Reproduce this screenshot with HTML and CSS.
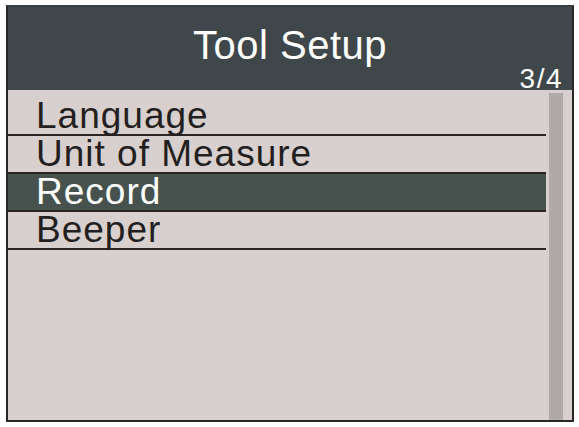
FILE: index.html
```html
<!DOCTYPE html>
<html>
<head>
<meta charset="utf-8">
<link rel="stylesheet" href="styles.css">
</head>
<body>
<div class="frame">
  <div class="header">
    <div class="title">Tool Setup</div>
    <div class="page">3/4</div>
  </div>
  <div class="body">
    <div class="list">
      <div class="row">Language</div>
      <div class="row">Unit of Measure</div>
      <div class="row selected">Record</div>
      <div class="row">Beeper</div>
    </div>
    <div class="scroll"></div>
  </div>
</div>
</body>
</html>
```
FILE: styles.css
```css
html, body {
  margin: 0;
  padding: 0;
  background: #ffffff;
}
body {
  font-family: "Liberation Sans", Arial, sans-serif;
}
.frame {
  box-sizing: border-box;
  width: 568px;
  height: 417px;
  margin: 5px 0 0 6px;
  border: 2px solid #2a2626;
  border-top-color: #3a4042;
  display: flex;
  flex-direction: column;
  background: #d8d0ce;
}
.header {
  height: 83px;
  flex: none;
  background: #40474a;
  display: grid;
  color: #ffffff;
}
.title {
  grid-area: 1 / 1;
  justify-self: center;
  align-self: start;
  margin-top: 18px;
  font-size: 40px;
  line-height: 40px;
  letter-spacing: 0.5px;
}
.page {
  grid-area: 1 / 1;
  justify-self: end;
  align-self: start;
  margin-top: 58px;
  margin-right: 9px;
  font-size: 28px;
  line-height: 28px;
  letter-spacing: 1.5px;
}
.body {
  flex: 1;
  display: flex;
  align-items: stretch;
}
.list {
  width: 538px;
  flex: none;
  padding-top: 8px;
}
.row {
  height: 36px;
  border-bottom: 2px solid #2b2526;
  padding-left: 28px;
  font-size: 37px;
  line-height: 35px;
  letter-spacing: 1px;
  color: #231f20;
  white-space: nowrap;
}
.row.selected {
  background: #47524f;
  color: #ffffff;
}
.scroll {
  width: 14px;
  margin-left: 3px;
  margin-top: 3px;
  background: #b1a9a7;
}
```
